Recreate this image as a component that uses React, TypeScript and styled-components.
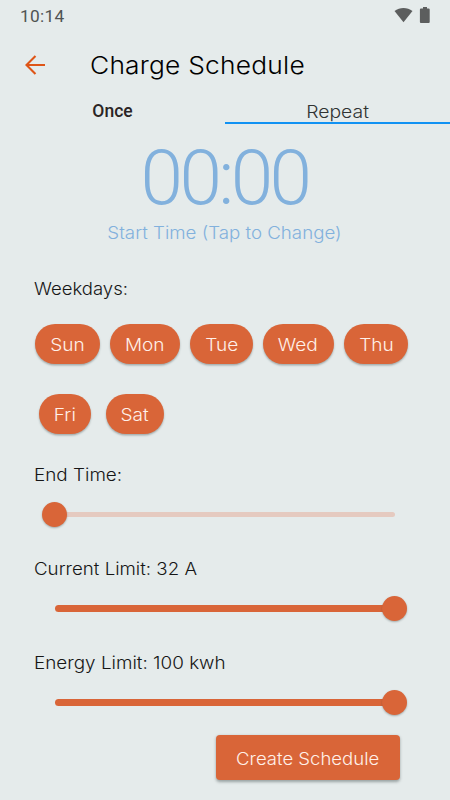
import React from "react";
import styled, { createGlobalStyle } from "styled-components";

const GlobalStyle = createGlobalStyle`
  * { box-sizing: border-box; }
  body { margin: 0; background: #e5ebeb; }
  button { border: 0; padding: 0; background: none; font: inherit; }
`;

const ORANGE = "#d96538";
const BLUE = "#82b1dd";

const Screen = styled.main`
  width: 450px;
  height: 800px;
  overflow: hidden;
  display: flex;
  flex-direction: column;
  background: #e5ebeb;
  color: #161616;
  font-family: Inter, sans-serif;
  font-weight: 300;
  font-size: 17px;
`;

const Wide = styled.span<{ $stretch: number; $origin?: string }>`
  display: inline-block;
  white-space: nowrap;
  transform: scaleX(${(p) => p.$stretch});
  transform-origin: ${(p) => p.$origin ?? "center"};
`;

const StatusBar = styled.div`
  height: 32px;
  flex: none;
  display: flex;
  align-items: center;
  justify-content: space-between;
  padding: 0 19px 0 20px;
  color: #505353;
  font: 400 17.3px/32px Roboto, sans-serif;
  letter-spacing: 0.3px;
`;

const StatusIcons = styled.svg`
  width: 37px;
  height: 18px;
  fill: #5c5e5e;
  margin-bottom: 2px;
`;

const Header = styled.header`
  height: 68px;
  flex: none;
  display: flex;
  align-items: center;
  padding: 0 0 2px 25px;
`;

const BackButton = styled.button`
  width: 20px;
  height: 20px;
  margin-right: 45px;
  svg { display: block; }
`;

const Title = styled.h1`
  margin: 0;
  color: #000;
  font-size: 24.5px;
  font-weight: 300;
  line-height: 32px;
  letter-spacing: 0.2px;
`;

const Tabs = styled.nav`
  height: 24px;
  flex: none;
  display: grid;
  grid-template-columns: 1fr 1fr;
`;

const Tab = styled.button<{ $active?: boolean }>`
  height: 24px;
  line-height: ${(p) => (p.$active ? 24 : 22)}px;
  color: ${(p) => (p.$active ? "#303333" : "#2a2424")};
  font-family: ${(p) => (p.$active ? "Inter" : "Roboto")}, sans-serif;
  font-size: ${(p) => (p.$active ? "17px" : "17.5px")};
  font-weight: ${(p) => (p.$active ? 300 : 500)};
  border-bottom: 2px solid ${(p) => (p.$active ? "#1192f3" : "transparent")};
`;

const Clock = styled.div`
  height: 154px;
  flex: none;
  display: flex;
  flex-direction: column;
  align-items: center;
  padding-top: 14px;
  color: ${BLUE};
`;

const Time = styled.div`
  font: 300 76.5px/80px Roboto, sans-serif;
  letter-spacing: -3.6px;
  margin-right: 1px;
`;

const Hint = styled.div`
  line-height: 24px;
  margin-top: 3px;
  margin-right: 1px;
`;

const Label = styled.div`
  height: 22px;
  flex: none;
  line-height: 22px;
  padding-left: 34px;
`;

const Days = styled.section`
  flex: none;
  display: flex;
  flex-direction: column;
  gap: 30px;
  margin: 24px 0 30px;
`;

const DayRow = styled.div<{ $indent: number; $gap: number }>`
  display: flex;
  gap: ${(p) => p.$gap}px;
  padding-left: ${(p) => p.$indent}px;
`;

const Day = styled.button<{ $width: number }>`
  width: ${(p) => p.$width}px;
  height: 40px;
  border-radius: 20px;
  background: ${ORANGE};
  color: #fff0e9;
  line-height: 42px;
  box-shadow: 0 1.5px 2px rgba(40, 55, 55, 0.35);
`;

const Field = styled.section`
  height: 94px;
  flex: none;
`;

const Slider = styled.div<{ $full?: boolean }>`
  width: 365px;
  height: 25px;
  margin: 16px 0 0 ${(p) => (p.$full ? 42.4 : 42.3)}px;
  display: flex;
  align-items: center;
  flex-direction: ${(p) => (p.$full ? "row" : "row-reverse")};
`;

const Track = styled.div<{ $full?: boolean }>`
  flex: 1;
  height: ${(p) => (p.$full ? 7 : 5)}px;
  margin: ${(p) => (p.$full ? "0 -8px 0 12.5px" : "0 12.5px 0 -8px")};
  border-radius: ${(p) => (p.$full ? 4 : 2.5)}px;
  background: ${(p) => (p.$full ? ORANGE : "#e5cac0")};
`;

const Thumb = styled.div`
  position: relative;
  width: 25px;
  height: 25px;
  border-radius: 50%;
  background: ${ORANGE};
  box-shadow: 0 1px 2px rgba(40, 55, 55, 0.35);
`;

const Footer = styled.footer`
  display: flex;
  justify-content: flex-end;
  margin-top: -11px;
  padding-right: 50px;
`;

const CreateButton = styled.button`
  width: 184px;
  height: 45px;
  border-radius: 4px;
  background: ${ORANGE};
  color: #fff0e9;
  line-height: 48px;
  box-shadow: 0 1.5px 3px rgba(40, 55, 55, 0.4);
`;

type DayItem = { name: string; width: number };

const firstDays: DayItem[] = [
  { name: "Sun", width: 65 },
  { name: "Mon", width: 70 },
  { name: "Tue", width: 62.5 },
  { name: "Wed", width: 71.5 },
  { name: "Thu", width: 64 },
];
const lastDays: DayItem[] = [
  { name: "Fri", width: 52 },
  { name: "Sat", width: 58.5 },
];

const renderDay = (d: DayItem) => (
  <Day key={d.name} $width={d.width}>
    <Wide $stretch={1.12}>{d.name}</Wide>
  </Day>
);

function RangeField({ label, stretch, full }: { label: string; stretch: number; full?: boolean }) {
  return (
    <Field>
      <Label>
        <Wide $stretch={stretch} $origin="left">{label}</Wide>
      </Label>
      <Slider $full={full}>
        <Track $full={full} />
        <Thumb />
      </Slider>
    </Field>
  );
}

export default function App() {
  return (
    <>
      <GlobalStyle />
      <Screen>
        <StatusBar>
          <span>10:14</span>
          <StatusIcons viewBox="0 0 37 18">
            <path d="M.5 5.1C5.8.8 13.2.8 18.5 5.1L9.5 16.2Z" />
            <path d="M29 .9h4v1.5h1.7q1 0 1 1v12.7q0 1-1 1h-7.8q-1 0-1-1V3.4q0-1 1-1H29Z" />
          </StatusIcons>
        </StatusBar>
        <Header>
          <BackButton aria-label="Back">
            <svg width="20" height="20" viewBox="0 0 20 20" fill="none" stroke="#de5517" strokeWidth="2.1">
              <path d="M20 10H2M10.5 .9 1.5 10l9 9.1" />
            </svg>
          </BackButton>
          <Title>
            <Wide $stretch={1.075} $origin="left">Charge Schedule</Wide>
          </Title>
        </Header>
        <Tabs>
          <Tab>Once</Tab>
          <Tab $active>
            <Wide $stretch={1.14}>Repeat</Wide>
          </Tab>
        </Tabs>
        <Clock>
          <Time>00:00</Time>
          <Hint>
            <Wide $stretch={1.1}>Start Time (Tap to Change)</Wide>
          </Hint>
        </Clock>
        <Label>
          <Wide $stretch={1.09} $origin="left">Weekdays:</Wide>
        </Label>
        <Days>
          <DayRow $indent={35} $gap={10}>{firstDays.map(renderDay)}</DayRow>
          <DayRow $indent={39} $gap={14.5}>{lastDays.map(renderDay)}</DayRow>
        </Days>
        <RangeField label="End Time:" stretch={1.11} />
        <RangeField label="Current Limit: 32 A" stretch={1.1} full />
        <RangeField label="Energy Limit: 100 kwh" stretch={1.11} full />
        <Footer>
          <CreateButton>
            <Wide $stretch={1.09}>Create Schedule</Wide>
          </CreateButton>
        </Footer>
      </Screen>
    </>
  );
}
